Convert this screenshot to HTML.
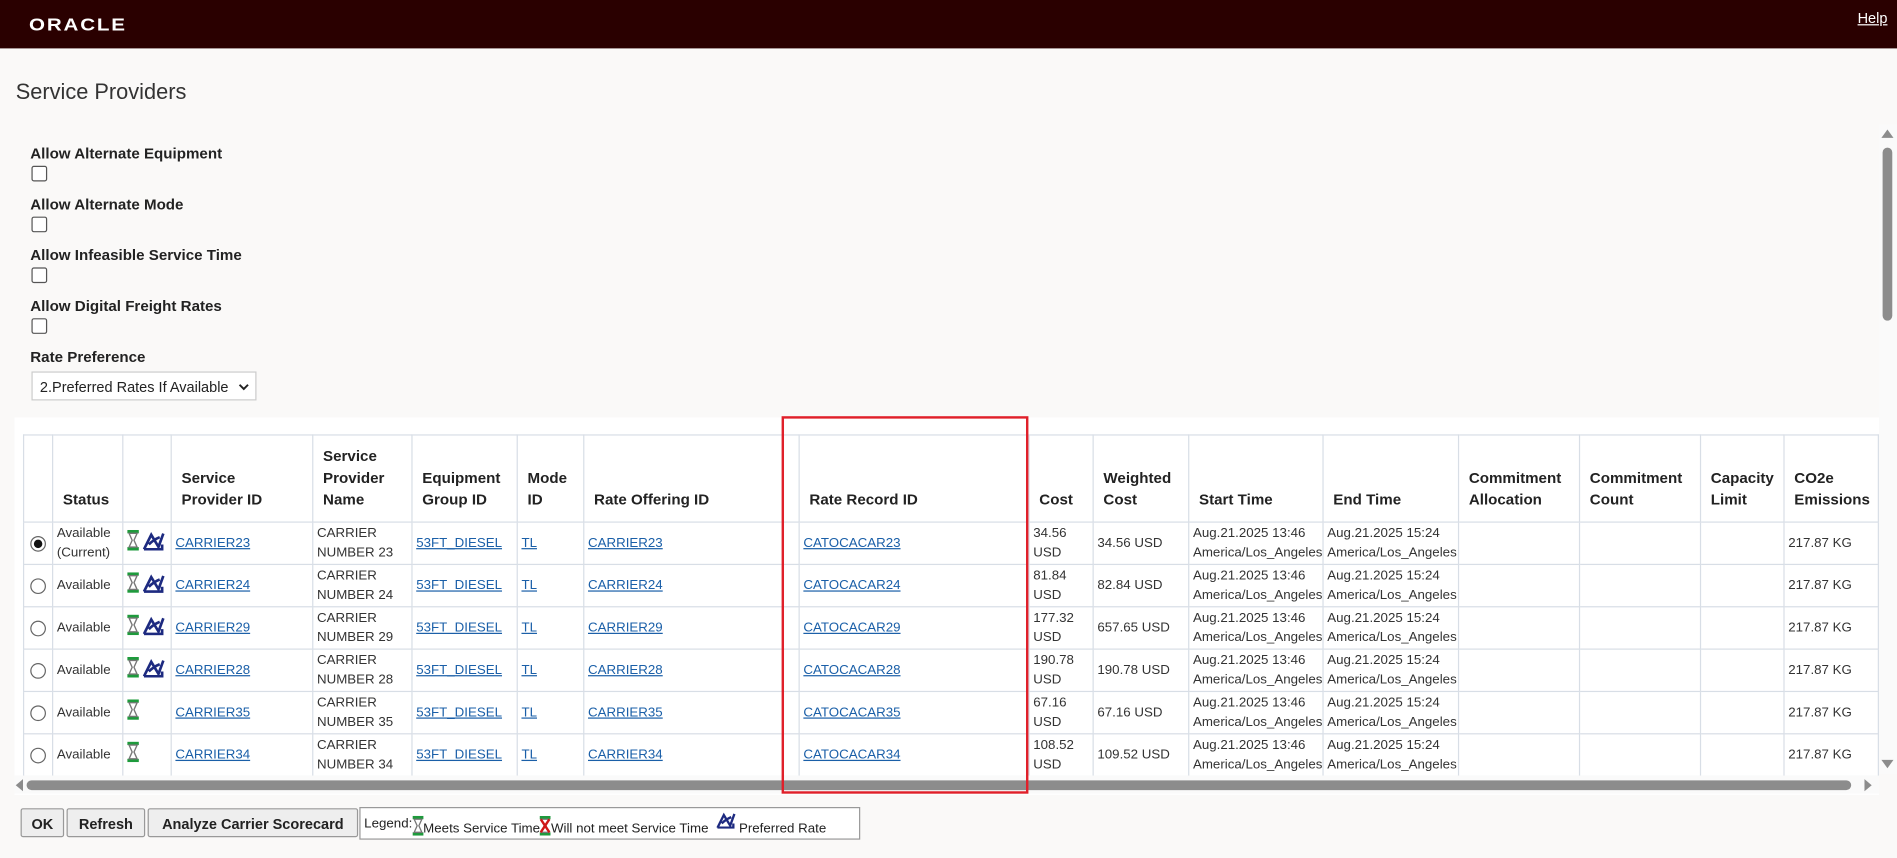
<!DOCTYPE html>
<html><head><meta charset="utf-8">
<style>
html,body{margin:0;padding:0;width:1897px;height:858px;overflow:hidden;background:#faf9f8;}
#w{position:absolute;left:0;top:0;width:1568px;height:709px;transform:scale(1.2099);transform-origin:0 0;font-family:"Liberation Sans",sans-serif;color:#222;}
.hdr{position:absolute;left:0;top:0;width:1568px;height:40px;background:#2a0000;}
.logo{position:absolute;left:24px;top:11px;color:#fff;font-size:17px;letter-spacing:1.5px;font-weight:bold;transform:scaleY(0.85);}
.help{position:absolute;right:8px;top:8px;color:#fff;font-size:12px;text-decoration:underline;}
h1{position:absolute;left:13px;top:66px;margin:0;font-size:18px;font-weight:normal;color:#333;}
.lbl{position:absolute;left:25px;font-size:12.5px;font-weight:bold;color:#222;}
.cb{position:absolute;left:26px;width:11px;height:11px;border:1px solid #555;border-radius:2px;background:#fff;}
.sel{position:absolute;left:26px;top:307px;width:186px;height:24px;border:1px solid #ccc;background:#fff;font-size:12px;line-height:24px;padding-left:6px;box-sizing:border-box;}
.sel svg{position:absolute;right:5px;top:9px;}
.tw{position:absolute;left:12px;top:345px;width:1541px;height:312px;background:#fff;}
table{position:absolute;left:19px;top:359px;border-collapse:collapse;table-layout:fixed;font-size:12px;width:1533px;}
td,th{border:1px solid #d8dee6;padding:0 3px;overflow:hidden;white-space:nowrap;}
th{height:62px;vertical-align:bottom;text-align:left;font-size:12.5px;font-weight:bold;padding:0 4px 9px 8px;line-height:18px;white-space:normal;}
td{height:34px;line-height:16px;font-size:11px;color:#333;}
a{color:#1a5fa8;text-decoration:underline;}
.wr{white-space:normal;}
.rad{display:inline-block;width:11px;height:11px;border:1px solid #666;border-radius:50%;vertical-align:middle;margin-left:2px;position:relative;background:#fff;}
.rad.on:after{content:"";position:absolute;left:2px;top:2px;width:7px;height:7px;border-radius:50%;background:#111;}
.red{position:absolute;left:646px;top:344px;width:200px;height:308px;border:2px solid #e0202a;}
.vs{position:absolute;left:1553px;top:103px;width:15px;height:537px;background:#fafafa;}
.vt{position:absolute;left:1556px;top:122px;width:8px;height:143px;background:#8c8c8c;border-radius:4px;}
.hs{position:absolute;left:12px;top:641px;width:1541px;height:15px;background:#fafafa;}
.ht{position:absolute;left:22px;top:645px;width:1508px;height:8px;background:#8c8c8c;border-radius:4px;}
.btn{position:absolute;top:668px;height:24px;border:1px solid #999;background:#eee;border-radius:2px;font-size:12px;font-weight:bold;line-height:24px;text-align:center;box-sizing:border-box;}
.leg{position:absolute;left:297px;top:667px;width:414px;height:27px;border:1px solid #999;background:#fff;font-size:11px;box-sizing:border-box;white-space:nowrap;padding:3px 0 0 3px;}
.leg span{display:inline-block;vertical-align:bottom;}
.leg svg{vertical-align:bottom;}
</style></head><body><div id="w">
<div class="hdr"><div class="logo">ORACLE</div><div class="help">Help</div></div>
<h1>Service Providers</h1>
<div class="lbl" style="top:120px">Allow Alternate Equipment</div><div class="cb" style="top:137px"></div>
<div class="lbl" style="top:162px">Allow Alternate Mode</div><div class="cb" style="top:179px"></div>
<div class="lbl" style="top:204px">Allow Infeasible Service Time</div><div class="cb" style="top:221px"></div>
<div class="lbl" style="top:246px">Allow Digital Freight Rates</div><div class="cb" style="top:263px"></div>
<div class="lbl" style="top:288px">Rate Preference</div>
<div class="sel">2.Preferred Rates If Available<svg width="9" height="6"><path d="M1 1 L4.5 4.5 L8 1" fill="none" stroke="#222" stroke-width="1.6"/></svg></div>
<div class="tw"></div>
<svg width="0" height="0" style="position:absolute"><defs>
<symbol id="hg" viewBox="0 0 10 18"><rect x="0" y="0" width="10" height="3" fill="#1e9a3c"/><rect x="0" y="15" width="10" height="3" fill="#1e9a3c"/><path d="M1.5 3 L8.5 3 L5.8 9 L8.5 15 L1.5 15 L4.2 9 Z" fill="#fff" stroke="#777" stroke-width="1.2"/></symbol>
<symbol id="pr" viewBox="0 0 18 16"><path d="M1 15 L7 3 L13 13 L17 2 M1 15 L16 15 L16 11 M5 11 Q9 7 14 5" fill="none" stroke="#1d2a80" stroke-width="2.2"/></symbol>
</defs></svg>
<table>
<colgroup><col style="width:24px"><col style="width:58px"><col style="width:40px"><col style="width:117px"><col style="width:82px"><col style="width:87px"><col style="width:55px"><col style="width:178px"><col style="width:190px"><col style="width:53px"><col style="width:79px"><col style="width:111px"><col style="width:112px"><col style="width:100px"><col style="width:100px"><col style="width:69px"><col style="width:78px"></colgroup>
<tr><th></th><th>Status</th><th></th><th>Service<br>Provider ID</th><th>Service Provider Name</th><th>Equipment Group ID</th><th>Mode ID</th><th>Rate Offering ID</th><th>Rate Record ID</th><th>Cost</th><th>Weighted Cost</th><th>Start Time</th><th>End Time</th><th>Commitment Allocation</th><th>Commitment Count</th><th>Capacity Limit</th><th>CO2e Emissions</th></tr>
<tr><td><span class="rad on"></span></td><td class="wr">Available (Current)</td><td><svg width="10" height="17"><use href="#hg"/></svg> <svg width="18" height="16"><use href="#pr"/></svg></td><td><a>CARRIER23</a></td><td class="wr">CARRIER NUMBER 23</td><td><a>53FT_DIESEL</a></td><td><a>TL</a></td><td><a>CARRIER23</a></td><td><a>CATOCACAR23</a></td><td class="wr">34.56 USD</td><td>34.56 USD</td><td class="wr">Aug.21.2025 13:46 America/Los_Angeles</td><td class="wr">Aug.21.2025 15:24 America/Los_Angeles</td><td></td><td></td><td></td><td>217.87 KG</td></tr>
<tr><td><span class="rad"></span></td><td>Available</td><td><svg width="10" height="17"><use href="#hg"/></svg> <svg width="18" height="16"><use href="#pr"/></svg></td><td><a>CARRIER24</a></td><td class="wr">CARRIER NUMBER 24</td><td><a>53FT_DIESEL</a></td><td><a>TL</a></td><td><a>CARRIER24</a></td><td><a>CATOCACAR24</a></td><td class="wr">81.84 USD</td><td>82.84 USD</td><td class="wr">Aug.21.2025 13:46 America/Los_Angeles</td><td class="wr">Aug.21.2025 15:24 America/Los_Angeles</td><td></td><td></td><td></td><td>217.87 KG</td></tr>
<tr><td><span class="rad"></span></td><td>Available</td><td><svg width="10" height="17"><use href="#hg"/></svg> <svg width="18" height="16"><use href="#pr"/></svg></td><td><a>CARRIER29</a></td><td class="wr">CARRIER NUMBER 29</td><td><a>53FT_DIESEL</a></td><td><a>TL</a></td><td><a>CARRIER29</a></td><td><a>CATOCACAR29</a></td><td class="wr">177.32 USD</td><td>657.65 USD</td><td class="wr">Aug.21.2025 13:46 America/Los_Angeles</td><td class="wr">Aug.21.2025 15:24 America/Los_Angeles</td><td></td><td></td><td></td><td>217.87 KG</td></tr>
<tr><td><span class="rad"></span></td><td>Available</td><td><svg width="10" height="17"><use href="#hg"/></svg> <svg width="18" height="16"><use href="#pr"/></svg></td><td><a>CARRIER28</a></td><td class="wr">CARRIER NUMBER 28</td><td><a>53FT_DIESEL</a></td><td><a>TL</a></td><td><a>CARRIER28</a></td><td><a>CATOCACAR28</a></td><td class="wr">190.78 USD</td><td>190.78 USD</td><td class="wr">Aug.21.2025 13:46 America/Los_Angeles</td><td class="wr">Aug.21.2025 15:24 America/Los_Angeles</td><td></td><td></td><td></td><td>217.87 KG</td></tr>
<tr><td><span class="rad"></span></td><td>Available</td><td><svg width="10" height="17"><use href="#hg"/></svg></td><td><a>CARRIER35</a></td><td class="wr">CARRIER NUMBER 35</td><td><a>53FT_DIESEL</a></td><td><a>TL</a></td><td><a>CARRIER35</a></td><td><a>CATOCACAR35</a></td><td class="wr">67.16 USD</td><td>67.16 USD</td><td class="wr">Aug.21.2025 13:46 America/Los_Angeles</td><td class="wr">Aug.21.2025 15:24 America/Los_Angeles</td><td></td><td></td><td></td><td>217.87 KG</td></tr>
<tr><td><span class="rad"></span></td><td>Available</td><td><svg width="10" height="17"><use href="#hg"/></svg></td><td><a>CARRIER34</a></td><td class="wr">CARRIER NUMBER 34</td><td><a>53FT_DIESEL</a></td><td><a>TL</a></td><td><a>CARRIER34</a></td><td><a>CATOCACAR34</a></td><td class="wr">108.52 USD</td><td>109.52 USD</td><td class="wr">Aug.21.2025 13:46 America/Los_Angeles</td><td class="wr">Aug.21.2025 15:24 America/Los_Angeles</td><td></td><td></td><td></td><td>217.87 KG</td></tr>
</table>
<div class="vs"></div><div class="vt"></div>
<div style="position:absolute;left:1555px;top:107px;width:0;height:0;border-left:5px solid transparent;border-right:5px solid transparent;border-bottom:7px solid #8c8c8c"></div>
<div style="position:absolute;left:1555px;top:628px;width:0;height:0;border-left:5px solid transparent;border-right:5px solid transparent;border-top:7px solid #8c8c8c"></div>
<div class="hs"></div><div class="ht"></div>
<div style="position:absolute;left:13px;top:644px;width:0;height:0;border-top:5px solid transparent;border-bottom:5px solid transparent;border-right:6px solid #8c8c8c"></div>
<div style="position:absolute;left:1541px;top:644px;width:0;height:0;border-top:5px solid transparent;border-bottom:5px solid transparent;border-left:6px solid #8c8c8c"></div>
<div class="red"></div>
<div class="btn" style="left:17px;width:36px">OK</div>
<div class="btn" style="left:55px;width:65px">Refresh</div>
<div class="btn" style="left:122px;width:174px">Analyze Carrier Scorecard</div>
<div class="leg"><span style="padding-bottom:4px">Legend:</span><svg width="9" height="17"><use href="#hg"/></svg><span>Meets Service Time</span><svg width="9" height="17" viewBox="0 0 10 18"><use href="#hg"/><path d="M1 3 L9 15 M9 3 L1 15" stroke="#d01818" stroke-width="2.2"/></svg><span>Will not meet Service Time</span>&nbsp;&nbsp;<svg width="16" height="14" style="margin-bottom:6px"><use href="#pr"/></svg>&nbsp;<span>Preferred Rate</span></div>
</div></body></html>
